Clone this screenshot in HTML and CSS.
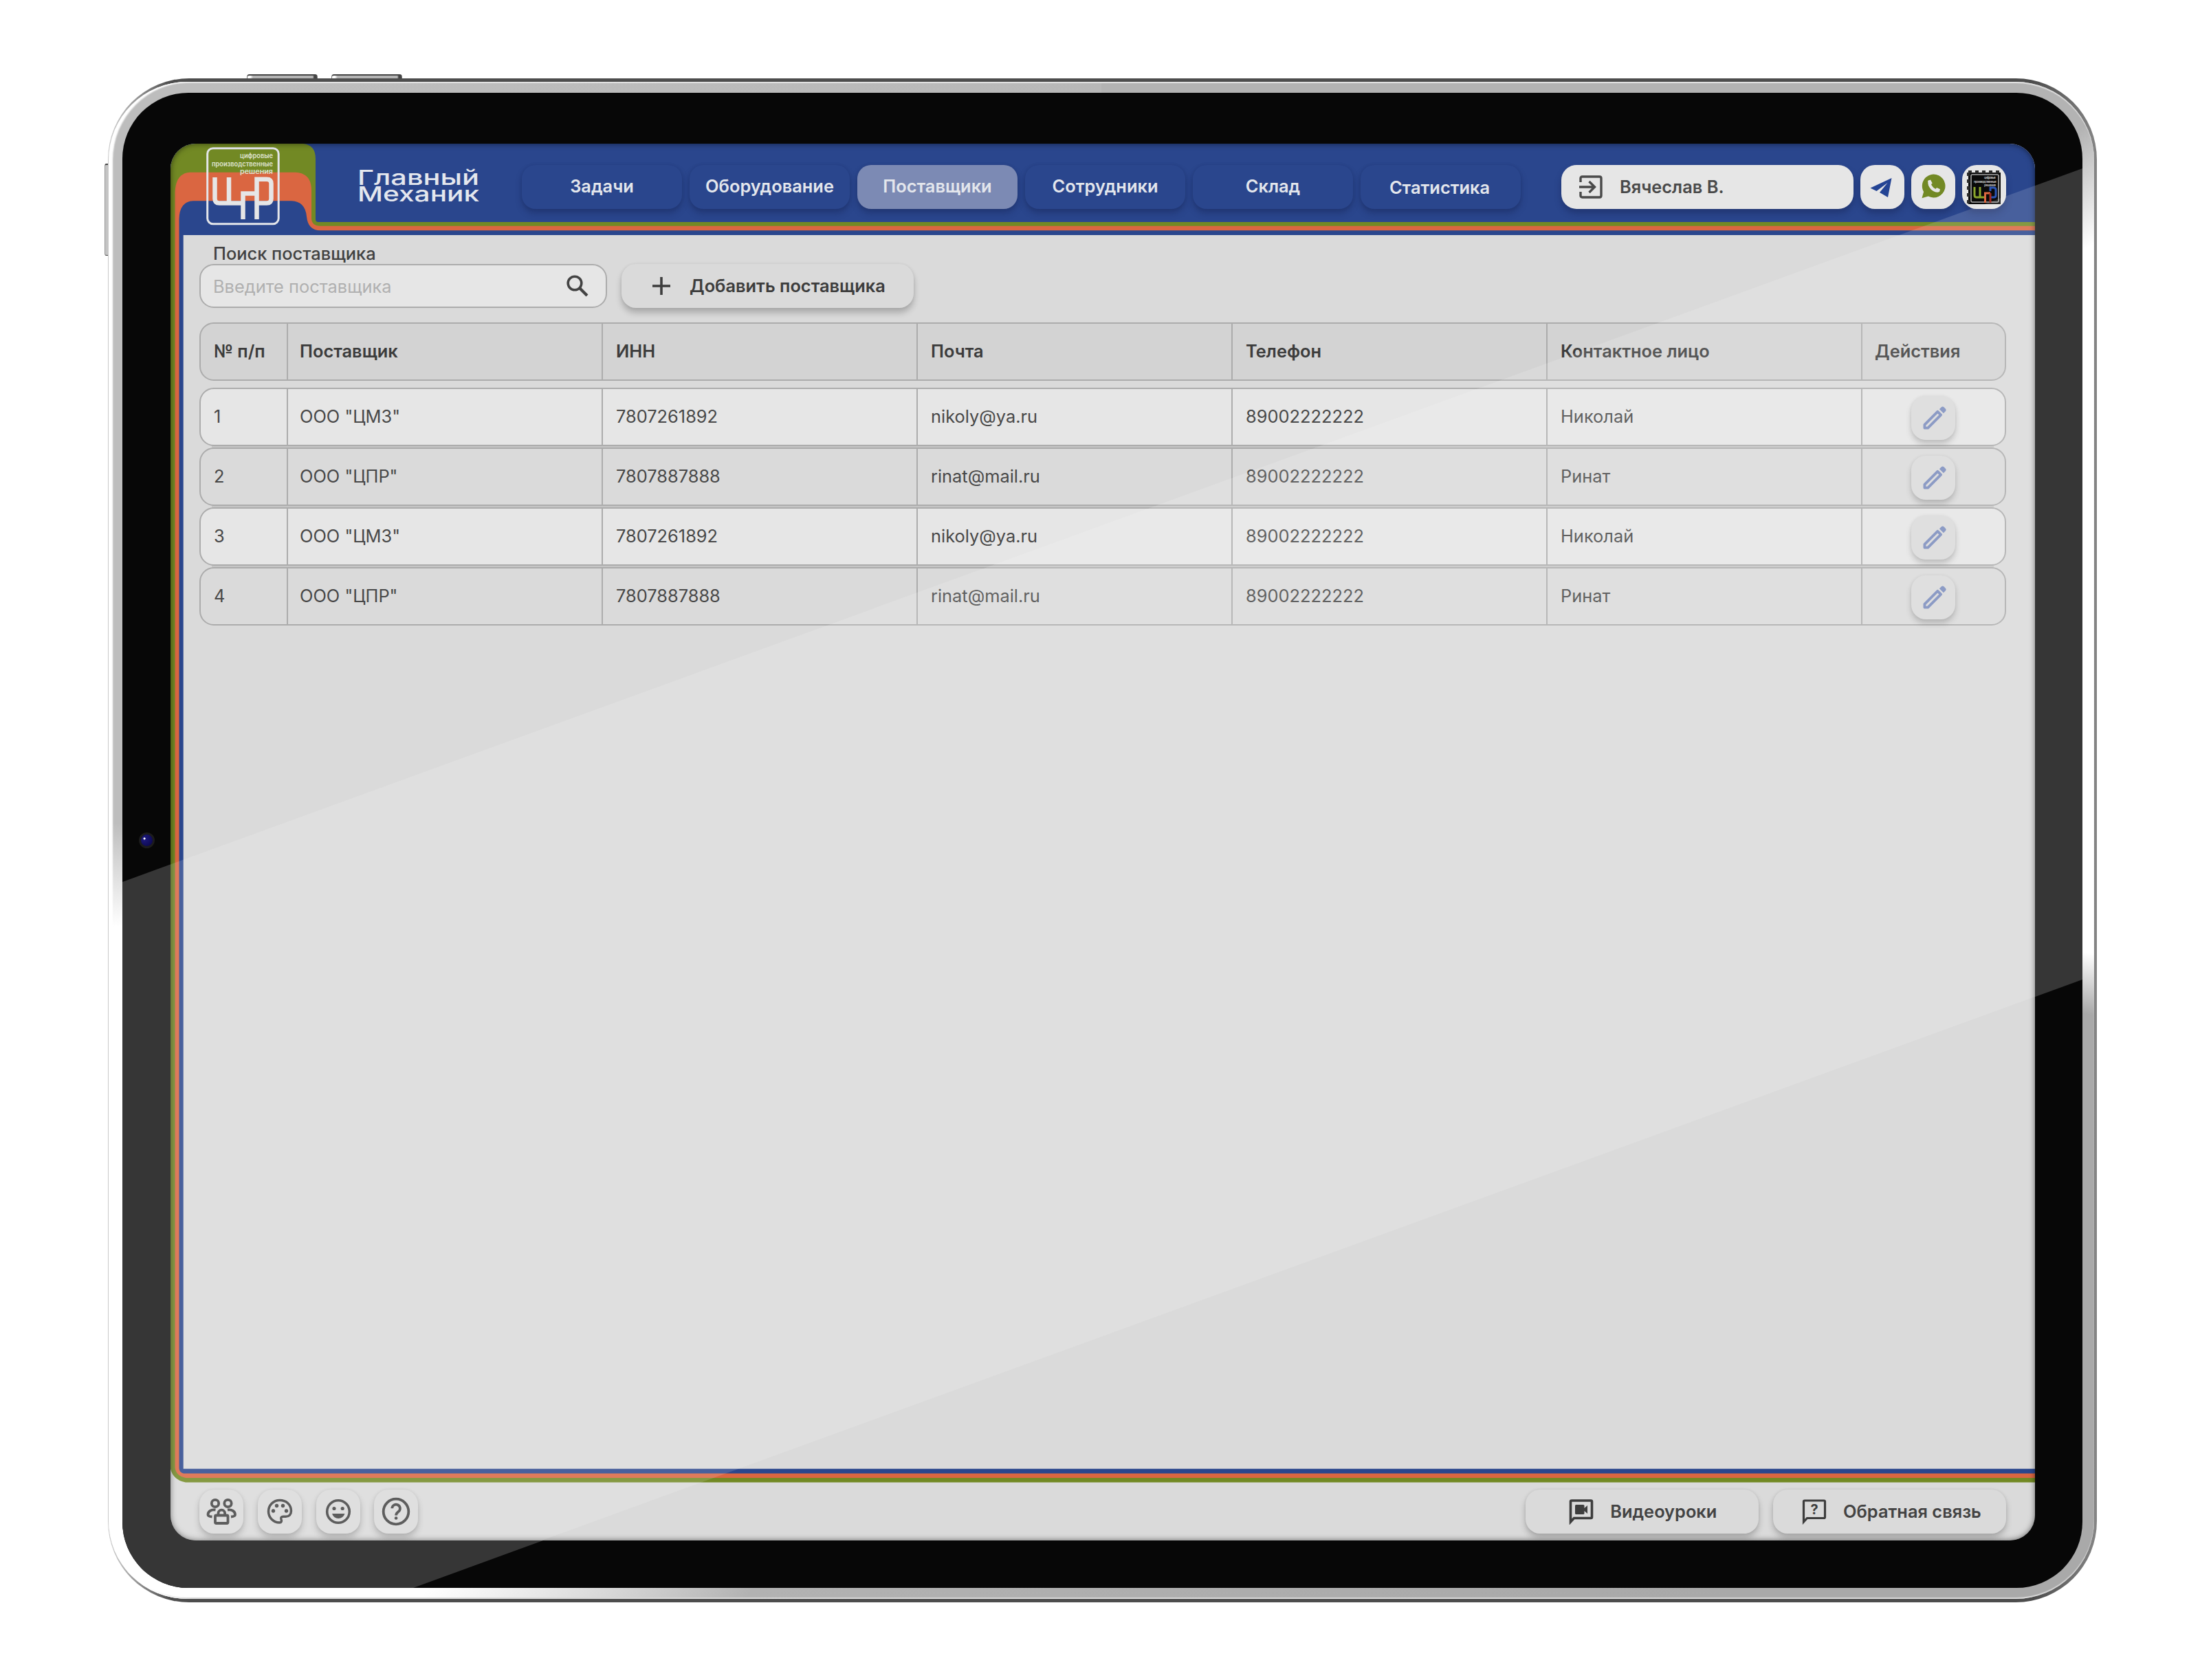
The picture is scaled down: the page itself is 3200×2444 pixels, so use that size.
FILE: index.html
```html
<!DOCTYPE html>
<html lang="ru">
<head>
<meta charset="utf-8">
<title>Главный Механик — Поставщики</title>
<link rel="stylesheet" href="styles.css">
</head>
<body>
<svg class="sprite" aria-hidden="true">
  <symbol id="pencil" viewBox="0 0 24 24"><path d="M4.6 16.8 14.9 6.5l2.600 2.600L7.200 19.400H4.600z" fill="none" stroke="currentColor" stroke-width="2.100" stroke-linejoin="round"/><path d="M16.300 4.500l1.600-1.600a1.400 1.400 0 0 1 2 0l1.300 1.300a1.400 1.400 0 0 1 0 2l-1.600 1.600z" fill="currentColor"/></symbol>
</svg>
<div class="stage">
  <i class="key key-a"></i><i class="key key-b"></i><i class="key key-c"></i>
  <div class="device">
    <div class="metal">
      <div class="bezel">
        <i class="camera"></i>
        <div class="screen">
          <svg class="frame" viewBox="0 0 2712 2032" aria-hidden="true">
            <path fill="#2a468d" d="M0 0H2712V118H0z"/>
            <path fill="#728924" d="M0 0H193Q211 2 211 22V110Q211 114 215 114H2712V1947.5H22Q4 1944 0 1928z"/>
            <path fill="#da6641" d="M6.5 70Q8 43 28 41.700H182Q205 43 205 68V108Q205 119.700 218 119.700H2712V1941H22Q8 1938 6.500 1926z"/>
            <path fill="#2a468d" d="M12.500 110Q13 84 33 83.300H176Q196 84 198 106Q200 126.300 218 126.300H2712V1934.500H19Q13 1933 12.500 1927z"/>
            <path fill="#dadada" d="M18.700 133H2712V1927.800H18.700z"/>
          </svg>
          <header class="header">
            <svg class="logo" viewBox="0 0 107 114">
              <rect x="1.700" y="1.700" width="103.500" height="110" rx="8" fill="none" stroke="#e4e6ea" stroke-width="3"/>
              <g fill="#dfe3cf" font-family="Inter, sans-serif" font-size="10">
                <text x="49" y="16" textLength="48" lengthAdjust="spacingAndGlyphs">цифровые</text>
                <text x="8" y="27.500" textLength="89" lengthAdjust="spacingAndGlyphs">производственные</text>
                <text x="49" y="38.500" textLength="48" lengthAdjust="spacingAndGlyphs">решения</text>
              </g>
              <path d="M12.500 44V75Q12.500 81.500 19 81.500H53M33 44V81M53.500 105V67.500H73.500M73.500 105V46.700H88Q94.500 46.700 94.500 53V75Q94.500 81.500 88 81.500H73.500" fill="none" stroke="#e6e6e6" stroke-width="6.500"/>
            </svg>
            <svg class="brand" viewBox="0 0 176 60">
              <g fill="#e4e7ee" font-family="Inter, sans-serif" font-weight="500" font-size="30">
                <text x="-2" y="26.500" textLength="177" lengthAdjust="spacingAndGlyphs">Главный</text>
                <text x="-2" y="51.300" textLength="177" lengthAdjust="spacingAndGlyphs">Механик</text>
              </g>
            </svg>
            <nav class="nav">
              <a class="tab">Задачи</a>
              <a class="tab">Оборудование</a>
              <a class="tab active">Поставщики</a>
              <a class="tab">Сотрудники</a>
              <a class="tab">Склад</a>
              <a class="tab low">Статистика</a>
            </nav>
            <div class="account">
              <div class="user">
                <svg class="exit" viewBox="0 0 34 34"><g fill="none" stroke="#4a4a4a" stroke-width="3.400"><path d="M2 10V4.500Q2 2 4.500 2H29.500Q32 2 32 4.500V29.500Q32 32 29.500 32H4.500Q2 32 2 29.500V24"/><path d="M0 17H22M14.500 9l8 8-8 8"/></g></svg>
                <span>Вячеслав В.</span>
              </div>
              <div class="square"><svg viewBox="0 0 64 64"><path fill="#244494" d="M45.500 19 14.500 33.500 23.500 38 39.500 26 28 40 40 47z"/></svg></div>
              <div class="square"><svg viewBox="0 0 64 64"><path fill="#728924" d="M32.500 13.500a17 17 0 1 1-7.800 32.100L15.500 48.300l2.600-9.300A17 17 0 0 1 32.500 13.500z"/><path fill="none" stroke="#e6e6e6" stroke-width="4.400" stroke-linecap="round" stroke-linejoin="round" d="M26.500 24.500C26 31 32 37.500 38.500 37.500"/><path fill="#e6e6e6" d="M24 23l4-1.500 2.700 5-3.200 3zM34.500 36.500l2.500-3.500 5 2.200-1 4z"/></svg></div>
              <div class="square"><svg viewBox="0 0 64 64">
                <path fill="#0a0a0a" d="M9 11H56V57H9z"/>
                <path d="M9 10H56M9 11V57" stroke="#2a2a2a" stroke-width="4" stroke-dasharray="5 5"/>
                <rect x="13" y="14" width="40" height="40" rx="2" fill="none" stroke="#a8a8a8" stroke-width="1.600"/>
                <g fill="#b8b8b8" font-family="Inter, sans-serif" font-size="5"><text x="32" y="20" textLength="17">цифровые</text><text x="17" y="25.500" textLength="33">производственные</text><text x="32" y="30.500" textLength="17">решения</text></g>
                <g fill="none" stroke-width="3"><path stroke="#8aa52c" d="M18 32V44Q18 47 21 47H33M26 32V47"/><path stroke="#2c55b5" d="M42 47H46Q49 47 49 44V36Q49 33 46 33H41V38"/><path stroke="#dd6840" d="M33.500 55V41H41"/><path stroke="#a32a20" d="M41 41V55"/></g>
              </svg></div>
            </div>
          </header>
          <main class="main">
            <label class="label">Поиск поставщика</label>
            <div class="tools">
              <div class="search"><span>Введите поставщика</span>
                <svg class="lens" viewBox="0 0 32 32"><circle cx="12" cy="12" r="9.800" fill="none" stroke="#434343" stroke-width="3.600"/><path d="M19 19 30 30" stroke="#434343" stroke-width="4.200"/></svg></div>
              <div class="add"><svg class="plus" viewBox="0 0 26 26"><path d="M13 0V26M0 13H26" stroke="#3d3d3d" stroke-width="3.600"/></svg><span>Добавить поставщика</span></div>
            </div>
            <div class="table">
              <div class="row head"><div>№ п/п</div><div>Поставщик</div><div>ИНН</div><div>Почта</div><div>Телефон</div><div>Контактное лицо</div><div>Действия</div></div>
              <div class="rows">
                <div class="row"><div>1</div><div>ООО "ЦМЗ"</div><div>7807261892</div><div>nikoly@ya.ru</div><div>89002222222</div><div>Николай</div><div class="act"><b class="edit"><svg><use href="#pencil"/></svg></b></div></div>
                <div class="row even"><div>2</div><div>ООО "ЦПР"</div><div>7807887888</div><div>rinat@mail.ru</div><div>89002222222</div><div>Ринат</div><div class="act"><b class="edit"><svg><use href="#pencil"/></svg></b></div></div>
                <div class="row"><div>3</div><div>ООО "ЦМЗ"</div><div>7807261892</div><div>nikoly@ya.ru</div><div>89002222222</div><div>Николай</div><div class="act"><b class="edit"><svg><use href="#pencil"/></svg></b></div></div>
                <div class="row even"><div>4</div><div>ООО "ЦПР"</div><div>7807887888</div><div>rinat@mail.ru</div><div>89002222222</div><div>Ринат</div><div class="act"><b class="edit"><svg><use href="#pencil"/></svg></b></div></div>
              </div>
            </div>
          </main>
          <footer class="footer">
            <div class="tool"><svg viewBox="0 0 64 64"><g fill="none" stroke="#434343" stroke-width="3.800"><circle cx="23" cy="20" r="5.200"/><circle cx="41.500" cy="20" r="5.200"/><path d="M23.500 29.500C17 28.500 12.500 32 12.500 36.500Q12.500 39 18.500 39.500M41 29.500C47.500 28.500 52 32 52 36.500Q52 39 46 39.500"/><rect x="23" y="37.500" width="18.500" height="11.500" rx="1.500"/><path d="M27.500 37V34.500a4.800 4.800 0 0 1 9.600 0V37"/></g></svg></div>
            <div class="tool"><svg viewBox="0 0 64 64"><path d="M32 15.500C22.500 15.500 15.500 22.800 15.500 31.800S22.800 48 31.500 48C34.500 48 35 45.500 34 43.500C32.800 40.800 34.500 39.300 37 39.300H40.500C45.500 39.300 48.500 36 48.500 31C48.500 21.500 41 15.500 32 15.500z" fill="none" stroke="#434343" stroke-width="3.500"/><g fill="#434343"><circle cx="22.500" cy="31" r="2.700"/><circle cx="27.500" cy="23.500" r="2.700"/><circle cx="36.500" cy="23.500" r="2.700"/><circle cx="41.500" cy="31" r="2.700"/></g></svg></div>
            <div class="tool"><svg viewBox="0 0 64 64"><circle cx="32" cy="32" r="16.300" fill="none" stroke="#434343" stroke-width="3.600"/><g fill="#434343"><circle cx="26" cy="27.500" r="2.600"/><circle cx="38.200" cy="27.500" r="2.600"/><path d="M23 35H41.500Q39 42 32.200 42T23 35z"/></g></svg></div>
            <div class="tool"><svg viewBox="0 0 64 64"><circle cx="32" cy="32" r="18.300" fill="none" stroke="#434343" stroke-width="3.800"/><path d="M26.300 27.300a5.800 5.800 0 1 1 9.600 4.500C33.500 33.700 32.100 34.300 32.100 37.500" fill="none" stroke="#434343" stroke-width="3.800"/><circle cx="32.100" cy="41.500" r="2.300" fill="#434343"/></svg></div>
            <div class="wide push"><svg class="chat" viewBox="0 0 38 38"><path d="M3.500 34V4Q3.500 3 5 3H33Q34.500 3 34.500 4.500V27Q34.500 28.500 33 28.500H8.500z" fill="none" stroke="#3d3d3d" stroke-width="3.600"/><path fill="#3d3d3d" d="M10 10.500Q10 9 11.500 9H22Q23.500 9 23.500 10.500V14L28 10V22L23.500 18V21.500Q23.500 23 22 23H11.500Q10 23 10 21.500z"/></svg><span>Видеоуроки</span></div>
            <div class="wide"><svg class="chat" viewBox="0 0 38 38"><path d="M3.500 34V4Q3.500 3 5 3H33Q34.500 3 34.500 4.500V27Q34.500 28.500 33 28.500H8.500z" fill="none" stroke="#3d3d3d" stroke-width="3.200"/><text x="19" y="23" text-anchor="middle" font-family="Inter, sans-serif" font-size="20" font-weight="700" fill="#3d3d3d">?</text></svg><span>Обратная связь</span></div>
          </footer>
          <i class="glare"></i>
        </div>
      </div>
    </div>
  </div>
</div>
</body>
</html>
```
FILE: styles.css
```css
* { box-sizing: border-box; }
body { margin: 0; background: #fff; font-family: Inter, "Noto Sans", sans-serif; font-size: 25.400px; color: #484848; }
svg { display: block; }
.sprite { position: absolute; width: 0; height: 0; }
.stage { position: relative; width: 3200px; height: 2444px; padding: 114px 150px 0 157px; overflow: hidden; }

/* tablet body */
.key { position: absolute; background: linear-gradient(90deg, #fff 0 4px, #b4b4b4 8px 94%, #444 96%); border: 1px solid #777; border-top: 2px solid #444; }
.key-a, .key-b { top: 108px; width: 103px; height: 12px; border-radius: 4px 4px 0 0; }
.key-a { left: 359px; }
.key-b { left: 482px; }
.key-c { left: 152px; top: 238px; width: 12px; height: 134px; background: #c4c4c4; border-color: #444 #999; border-radius: 3px 0 0 3px; }
.device { position: relative; width: 2893px; height: 2217px; padding: 5px 4px 5px 1px; border-radius: 118px; background: linear-gradient(90deg, #c9c9c9 0, #c9c9c9 8px, #4d4d4d 90px, #4d4d4d 2800px, #858585 100%); }
.metal { height: 2207px; padding: 16px 17px; padding-left: 20px; border-radius: 114px; box-shadow: inset 6px 0 2px #fff, inset 0 2px 1px #dedede, inset 0 -2px 1px #d6d6d6;
  background: conic-gradient(#b3b3b3 0 54deg, #fff 59deg 96.500deg, #a9a9a9 100deg 140deg, #b2b2b2 205deg, #fff 222deg 265deg, #bdbdbd 271deg 310deg, #b8b8b8 360deg); }
.bezel { position: relative; width: 2851px; height: 2175px; padding: 74px 0 0 70px; border-radius: 96px; overflow: hidden; background: #070707; }
.bezel::before { content: ""; position: absolute; inset: 0; background: #363636; clip-path: polygon(0 1148px, 2851px 110px, 2851px 1290px, 423px 2175px, 0 2175px); }
.camera { position: absolute; left: 24px; top: 1076px; width: 23px; height: 23px; border-radius: 50%; border: 3px solid #1c1c1c; background: radial-gradient(circle at 30% 35%, #fff 0 1px, #1b1878 2px, #0c0850 80%); }
.screen { position: relative; width: 2712px; height: 2032px; border-radius: 37px; overflow: hidden; background: #dadada; display: flex; flex-direction: column; }
.frame { position: absolute; inset: 0; width: 2712px; height: 2032px; }
.glare { position: absolute; inset: 0; border-radius: 37px; box-shadow: inset 0 0 8px rgba(0,0,0,.55); }
.glare::before { content: ""; position: absolute; inset: 0; background: rgba(255,255,255,.14); clip-path: polygon(0 1048.500px, 2712px 61px, 2712px 1241px, 540px 2032px, 0 2032px); }

/* header */
.header { position: relative; flex: none; height: 133px; display: flex; align-items: flex-start; padding: 0 42px 0 52px; color: #e3e6ec; font-weight: 600; }
.logo { width: 107px; height: 114px; margin-top: 5px; }
.brand { width: 176px; height: 60px; margin: 33px 0 0 115px; overflow: visible; }
.nav { display: flex; gap: 11px; margin: 31px 0 0 61px; }
.tab { width: 233px; height: 64px; border-radius: 20px; display: flex; align-items: center; justify-content: center; padding-bottom: 3px; background: #2a468d; box-shadow: 0 6px 10px rgba(20,30,75,.36), 0 0 4px rgba(20,30,75,.12); }
.tab.active { background: #7c8ab4; }
.tab.low { padding: 0 3px 0 0; }
.account { display: flex; gap: 10px; margin: 31px 0 0 auto; }
.user { width: 425px; height: 64px; border-radius: 22px; background: #e6e6e6; color: #4a4a4a; display: flex; align-items: center; padding: 0 0 1px 26px; gap: 25px; box-shadow: 0 6px 10px rgba(20,30,75,.4); }
.exit { width: 34px; height: 34px; }
.square { width: 64px; height: 64px; border-radius: 21px; background: #e6e6e6; box-shadow: 0 6px 10px rgba(20,30,75,.4); overflow: hidden; }

/* content */
.main { position: relative; flex: 1; padding: 20px 42px 0; }
.label { display: block; padding-left: 20px; height: 22px; line-height: 30px; margin-top: -8px; margin-bottom: 8px; font-weight: 500; color: #414141; }
.main { padding-top: 20px; display: flow-root; }
.tools { display: flex; gap: 21px; }
.search { width: 593px; height: 64px; border: 2.500px solid #acacac; border-radius: 21px; background: #e6e6e6; color: #b0b0b0; display: flex; align-items: center; justify-content: space-between; padding: 0 25px 0 18px; }
.lens { width: 32px; height: 32px; }
.add { width: 425px; height: 64px; border-radius: 21px; background: #dadada; box-shadow: 0 7px 10px rgba(0,0,0,.22), 0 0 4px rgba(0,0,0,.08); display: flex; align-items: center; padding: 0 0 1px 45px; gap: 28px; font-weight: 600; color: #3d3d3d; }
.plus { width: 26px; height: 26px; }
.table { margin-top: 21px; display: flex; flex-direction: column; gap: 10px; }
.rows { display: flex; flex-direction: column; gap: 2px; background: linear-gradient(#c6c6c6, #c6c6c6) center / calc(100% - 36px) calc(100% - 20px) no-repeat; }
.row { height: 85px; display: grid; grid-template-columns: 127px repeat(5, 458px) 1fr; border: 2.500px solid #acacac; border-radius: 21px; background: #e6e6e6; }
.row.even { background: #dadada; }
.row.head { background: #d3d3d3; font-weight: 600; color: #3c3c3c; }
.row > div { display: flex; align-items: center; padding: 0 0 2px 19px; border-right: 2px solid #acacac; }
.row > div:nth-child(2) { padding-left: 17px; }
.row > div:last-child { border-right: 0; }
.row.head > div:last-child { padding-left: 18px; }
.row > .act { padding: 2px 1px 0 0; justify-content: center; }
.edit { width: 64px; height: 64px; border-radius: 21px; background: #dadada; box-shadow: 0 6px 9px rgba(0,0,0,.2), 0 0 5px rgba(0,0,0,.07); color: #7a8bbc; padding: 11px 11px; }
.edit svg { width: 44px; height: 44px; }

/* footer */
.footer { position: relative; flex: none; height: 84px; display: flex; gap: 20.800px; padding: 10px 42px; }
.tool, .wide { height: 64px; border-radius: 21px; background: #dadada; box-shadow: 0 6px 10px rgba(0,0,0,.22), 0 0 4px rgba(0,0,0,.08); }
.tool { width: 64px; }
.wide { width: 339px; display: flex; align-items: center; padding: 0 0 1px 41px; gap: 23px; font-weight: 600; color: #434343; white-space: nowrap; }
.push { margin-left: auto; padding-left: 62px; }
.chat { width: 38px; height: 38px; }
```
